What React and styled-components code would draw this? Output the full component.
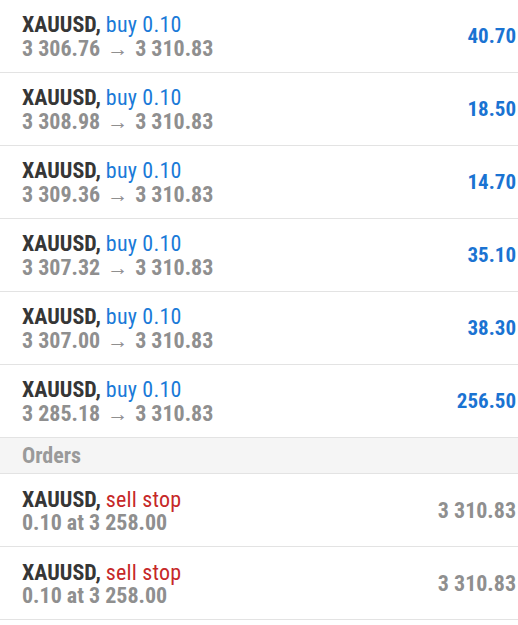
import React from 'react';
import styled, { createGlobalStyle } from 'styled-components';

const GlobalStyle = createGlobalStyle`
  html, body {
    margin: 0;
    padding: 0;
    background: #ffffff;
  }
  body {
    font-family: "Roboto Condensed", "Roboto", "Liberation Sans", sans-serif;
    -webkit-font-smoothing: antialiased;
  }
`;

const List = styled.div`
  width: 518px;
  display: flex;
  flex-direction: column;
`;

const Row = styled.div`
  height: 72px;
  border-bottom: 1px solid #e3e3e3;
  display: flex;
  align-items: center;
  justify-content: space-between;
  padding: 0 2px 0 22px;
`;

const Info = styled.div`
  display: flex;
  flex-direction: column;
  padding-top: ${p => p.$order ? '2px' : '1px'};
`;

const Title = styled.div`
  font-size: 22px;
  line-height: ${p => p.$order ? '23px' : '24px'};
  color: #363636;
  white-space: nowrap;
`;

const Symbol = styled.span`
  font-weight: 700;
`;

const Action = styled.span`
  color: ${p => p.$sell ? '#c62828' : '#1a7ad8'};
  letter-spacing: 0.2px;
`;

const Prices = styled.div`
  font-size: 22px;
  line-height: ${p => p.$order ? '23px' : '24px'};
  font-weight: 700;
  color: #8f8f8f;
  white-space: nowrap;
`;

const Arrow = styled.span`
  font-weight: 400;
  font-size: 21px;
  margin: 0 7px;
`;

const Profit = styled.div`
  font-size: ${p => p.$muted ? '22px' : '21px'};
  font-weight: 700;
  color: ${p => p.$muted ? '#8f8f8f' : '#1a73d2'};
`;

const Header = styled.div`
  height: 35px;
  background: #f5f5f5;
  border-bottom: 1px solid #e3e3e3;
  display: flex;
  align-items: center;
  padding-left: 22px;
  font-size: 22px;
  font-weight: 700;
  color: #9a9a9a;
`;

const positions = [
  { open: '3 306.76', profit: '40.70' },
  { open: '3 308.98', profit: '18.50' },
  { open: '3 309.36', profit: '14.70' },
  { open: '3 307.32', profit: '35.10' },
  { open: '3 307.00', profit: '38.30' },
  { open: '3 285.18', profit: '256.50' },
];

const orders = [
  { line: '0.10 at 3 258.00', price: '3 310.83' },
  { line: '0.10 at 3 258.00', price: '3 310.83' },
];

export default function App() {
  return (
    <>
      <GlobalStyle />
      <List>
        {positions.map((p, i) => (
          <Row key={i}>
            <Info>
              <Title>
                <Symbol>XAUUSD,</Symbol> <Action>buy 0.10</Action>
              </Title>
              <Prices>
                {p.open}<Arrow>→</Arrow>3 310.83
              </Prices>
            </Info>
            <Profit>{p.profit}</Profit>
          </Row>
        ))}
        <Header>Orders</Header>
        {orders.map((o, i) => (
          <Row key={i}>
            <Info $order>
              <Title $order>
                <Symbol>XAUUSD,</Symbol> <Action $sell>sell stop</Action>
              </Title>
              <Prices $order>{o.line}</Prices>
            </Info>
            <Profit $muted>{o.price}</Profit>
          </Row>
        ))}
      </List>
    </>
  );
}
